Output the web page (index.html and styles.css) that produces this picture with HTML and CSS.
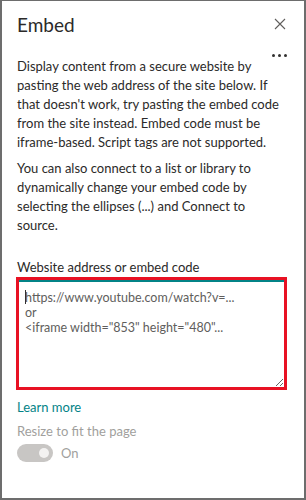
FILE: index.html
```html
<!DOCTYPE html>
<html lang="en">
<head>
    <meta charset="UTF-8">
    <meta name="viewport" content="width=device-width, initial-scale=1.0">
    <title>Embed</title>
    <link rel="stylesheet" href="styles.css">
</head>
<body>

    <div class="pane">
        <div class="pane-head">
            <h2 class="pane-title">Embed</h2>
            <button class="close-btn" aria-label="Close">
                <svg width="12" height="12" viewBox="0 0 12 12">
                    <path d="M1 1 L11 11 M11 1 L1 11" stroke="#605e5c" stroke-width="1.1" fill="none"/>
                </svg>
            </button>
        </div>

        <div class="more-row">
            <button class="more-btn" aria-label="More">
                <span></span><span></span><span></span>
            </button>
        </div>

        <p class="desc">Display content from a secure website by pasting the web address of the site below. If that doesn't work, try pasting the embed code from the site instead. Embed code must be iframe-based. Script tags are not supported.</p>
        <p class="desc">You can also connect to a list or library to dynamically change your embed code by selecting the ellipses (...) and Connect to source.</p>

        <label class="field-label" for="embed-code">Website address or embed code</label>
        <div class="highlight">
            <textarea id="embed-code" placeholder="https://www.youtube.com/watch?v=...&#10;or&#10;<iframe width=&quot;853&quot; height=&quot;480&quot;..."></textarea>
            <!-- Cursor im leeren Feld -->
            <span class="caret"></span>
        </div>

        <a class="learn-more" href="#">Learn more</a>

        <div class="toggle-label">Resize to fit the page</div>
        <div class="toggle-row">
            <span class="toggle"><span class="thumb"></span></span>
            <span class="toggle-text">On</span>
        </div>
    </div>

</body>
</html>
```

FILE: styles.css
```css
html, body {
    margin: 0;
    padding: 0;
}

body {
    width: 306px;
    height: 500px;
    font-family: Lato, "Noto Sans", sans-serif;
    color: #2b2a29;
    background-color: #ffffff;
}

.pane {
    box-sizing: border-box;
    width: 306px;
    height: 500px;
    border: 2px solid #6d6d6d;
    border-top-width: 1px;
    padding: 0 16px 0 15px;
}

.pane-head {
    display: flex;
    justify-content: space-between;
    align-items: center;
    height: 46px;
    padding-right: 2px;
}

.pane-title {
    margin: 0;
    font-size: 19px;
    font-weight: 400;
    color: #2b2a29;
}

.close-btn {
    border: none;
    background: none;
    padding: 0;
    width: 12px;
    height: 12px;
    cursor: pointer;
}

.more-row {
    display: flex;
    justify-content: flex-end;
    align-items: flex-end;
    height: 10px;
    padding-right: 1px;
}

.more-btn {
    display: flex;
    gap: 3px;
    align-items: flex-end;
    border: none;
    background: none;
    padding: 0;
    cursor: pointer;
}

.more-btn span {
    width: 3px;
    height: 3px;
    border-radius: 50%;
    background-color: #323130;
}

.desc {
    margin: 0 0 7px 0;
    font-size: 13px;
    line-height: 19px;
}

.field-label {
    display: block;
    margin-top: 23px;
    font-size: 13px;
    line-height: 19px;
}

/* Rahmen um das Textfeld */
.highlight {
    position: relative;
    margin-left: -1px;
    border: 3px solid #e81123;
    width: 265px;
    height: 107px;
}

.highlight textarea {
    box-sizing: border-box;
    display: block;
    width: 100%;
    height: 100%;
    margin: 0;
    border: none;
    border-top: 2px solid #038387;
    padding: 8px 6px;
    font-family: inherit;
    font-size: 12.5px;
    line-height: 15px;
    resize: vertical;
    outline: none;
}

.highlight textarea::placeholder {
    color: #605e5c;
}

.caret {
    position: absolute;
    left: 6px;
    top: 10px;
    width: 1px;
    height: 14px;
    background-color: #323130;
}

.learn-more {
    display: inline-block;
    margin-top: 8px;
    font-size: 13px;
    line-height: 18px;
    color: #038387;
    text-decoration: none;
}

.toggle-label {
    margin-top: 6px;
    font-size: 13px;
    line-height: 19px;
    color: #a19f9d;
}

.toggle-row {
    display: flex;
    align-items: center;
    gap: 8px;
    margin-top: 3px;
}

.toggle {
    display: flex;
    justify-content: flex-end;
    align-items: center;
    box-sizing: border-box;
    width: 36px;
    height: 18px;
    padding: 0 4px;
    border-radius: 9px;
    background-color: #c8c6c4;
}

.thumb {
    width: 10px;
    height: 10px;
    border-radius: 50%;
    background-color: #f3f2f1;
}

.toggle-text {
    font-size: 13px;
    color: #a19f9d;
}
```
